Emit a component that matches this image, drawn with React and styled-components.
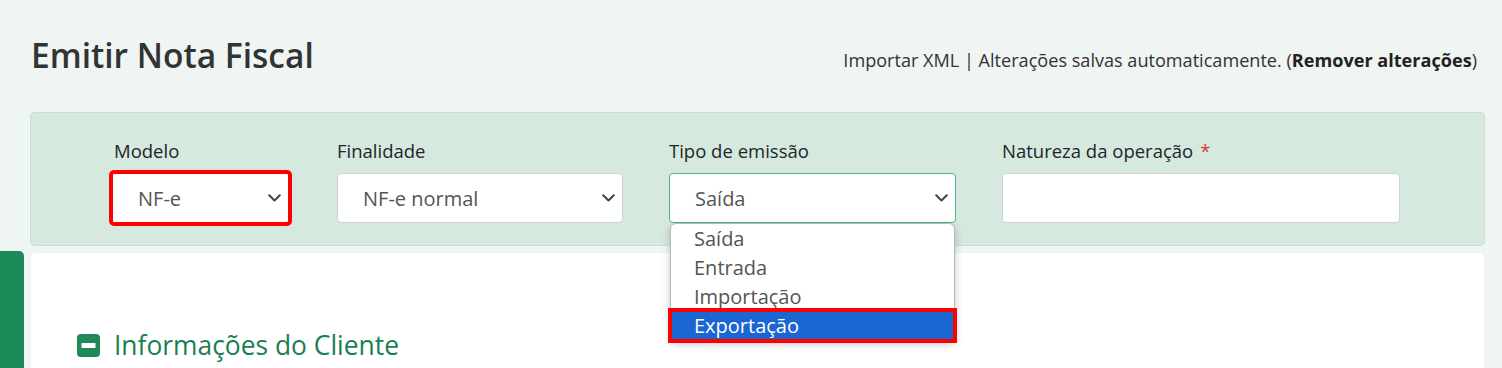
import React from "react";
import styled, { createGlobalStyle } from "styled-components";

const GlobalStyle = createGlobalStyle`
  html, body { margin: 0; padding: 0; }
  body {
    background: #eef5f2;
    font-family: "Open Sans", "Noto Sans", sans-serif;
    overflow: hidden;
    height: 368px;
  }
`;

const Page = styled.div`
  position: relative;
  padding: 0 17px 0 30px;
  height: 368px;
  overflow: hidden;
`;

const Header = styled.header`
  display: flex;
  justify-content: space-between;
  align-items: flex-end;
  padding-top: 34px;
  margin-bottom: 36px;
`;

const Title = styled.h1`
  margin: 0 0 0 1px;
  font-size: 33.5px;
  line-height: 42px;
  font-weight: 600;
  color: #333;
`;

const HeaderLinks = styled.div`
  font-size: 18.1px;
  line-height: 24px;
  color: #333;
  padding: 0 8px 4px 0;
  b { font-weight: 700; color: #222; }
`;

const Panel = styled.section`
  display: flex;
  background: #d5e9df;
  border: 1px solid #c9ddd3;
  border-radius: 5px;
  padding: 26px 0 22px 81px;
`;

const Field = styled.div`
  position: relative;
  display: flex;
  flex-direction: column;
  width: ${(p) => p.$w}px;
`;

const Label = styled.label`
  font-size: 18.5px;
  line-height: 24px;
  color: #212529;
  margin: 0 0 10px ${(p) => p.$indent || 0}px;
`;

const Required = styled.span`
  color: #dc3545;
  margin-left: 7px;
`;

const SelectBox = styled.div`
  box-sizing: border-box;
  display: flex;
  align-items: center;
  width: ${(p) => p.$w}px;
  height: 50px;
  background: #fff;
  border: 1px solid ${(p) => (p.$focused ? "#4cb884" : "#ced4da")};
  border-radius: ${(p) => (p.$marked ? "2px" : "4px")};
  padding: 0 7px 0 25px;
  font-size: 20px;
  color: #555;
  outline: ${(p) => (p.$marked ? "4px solid #ff0000" : "none")};
  outline-offset: -1px;
`;

const SelectValue = styled.span`
  flex: 1;
`;

const Chevron = () => (
  <svg width="13" height="8" viewBox="0 0 13 8" fill="none">
    <path d="M1.2 1.2l5.3 5.3 5.3-5.3" stroke="#444" strokeWidth="2" strokeLinecap="round" strokeLinejoin="round" />
  </svg>
);

const Dropdown = styled.ul`
  position: absolute;
  top: 84px;
  left: 1px;
  z-index: 5;
  box-sizing: border-box;
  width: 285px;
  margin: 0;
  padding: 0;
  list-style: none;
  background: #fff;
  border: 1px solid #b9b9b9;
  border-radius: 6px;
  box-shadow: 0 3px 9px rgba(0, 0, 0, 0.22);
`;

const Option = styled.li`
  height: 29px;
  line-height: 30px;
  padding-left: 23px;
  font-size: 20px;
  color: ${(p) => (p.$active ? "#fff" : "#555")};
  background: ${(p) => (p.$active ? "#1a66d2" : "transparent")};
  outline: ${(p) => (p.$active ? "4px solid #ff0000" : "none")};
  outline-offset: -1px;
`;

const Card = styled.section`
  margin: 7px 1px 0 1px;
  background: #fff;
  border-radius: 5px;
  padding: 74px 46px 0;
  height: 200px;
`;

const SectionTitle = styled.h2`
  display: flex;
  align-items: center;
  gap: 14px;
  margin: 0;
  font-size: 26.4px;
  line-height: 36px;
  font-weight: 500;
  color: #1a7f50;
`;

const SideTab = styled.div`
  position: absolute;
  left: 0;
  top: 251px;
  width: 24px;
  height: 130px;
  background: #1b8a56;
  border-top-right-radius: 5px;
`;

const MinusSquare = () => (
  <svg width="23" height="23" viewBox="0 0 23 23">
    <rect x="0" y="0" width="23" height="23" rx="4" fill="#1d8a57" />
    <rect x="4.5" y="9" width="14" height="5" rx="0.5" fill="#fff" />
  </svg>
);

const fields = [
  { label: "Modelo", col: 225, w: 177, value: "NF-e", marked: true, indent: 2 },
  { label: "Finalidade", col: 332, w: 286, value: "NF-e normal" },
  { label: "Tipo de emissão", col: 333, w: 287, value: "Saída", focused: true, open: true },
];

const options = ["Saída", "Entrada", "Importação", "Exportação"];

export default function App() {
  return (
    <>
      <GlobalStyle />
      <Page>
        <Header>
          <Title>Emitir Nota Fiscal</Title>
          <HeaderLinks>
            Importar XML | Alterações salvas automaticamente. (<b>Remover alterações</b>)
          </HeaderLinks>
        </Header>
        <Panel>
          {fields.map((f) => (
            <Field key={f.label} $w={f.col}>
              <Label $indent={f.indent}>{f.label}</Label>
              <SelectBox $w={f.w} $marked={f.marked} $focused={f.focused}>
                <SelectValue>{f.value}</SelectValue>
                <Chevron />
              </SelectBox>
              {f.open && (
                <Dropdown>
                  {options.map((o) => (
                    <Option key={o} $active={o === "Exportação"}>{o}</Option>
                  ))}
                </Dropdown>
              )}
            </Field>
          ))}
          <Field $w={398}>
            <Label>
              Natureza da operação<Required>*</Required>
            </Label>
            <SelectBox $w={398} />
          </Field>
        </Panel>
        <Card>
          <SectionTitle>
            <MinusSquare />
            Informações do Cliente
          </SectionTitle>
        </Card>
        <SideTab />
      </Page>
    </>
  );
}
